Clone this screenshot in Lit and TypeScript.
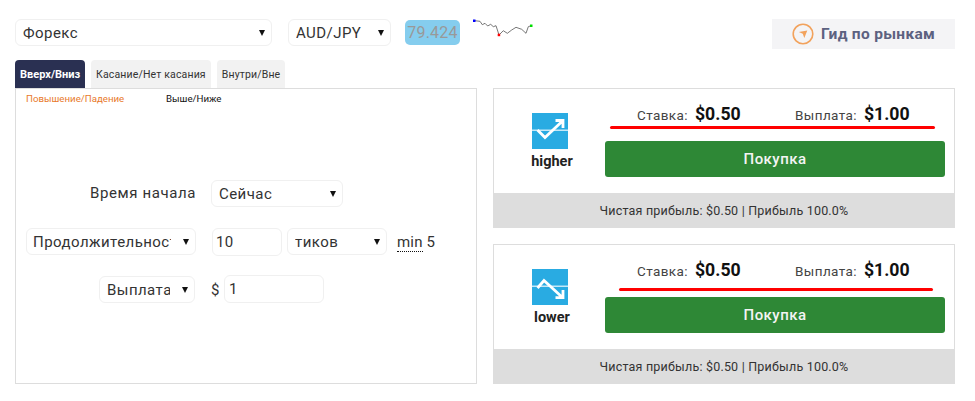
import { LitElement, html, css, svg } from "lit";
import { customElement } from "lit/decorators.js";

const spark = "4.7,5.7 10,6.3 12.3,9.7 15,8.3 17.7,11 20.7,9.3 23.3,11.7 26,10.7 29,20 33.3,15.7 37.3,18.3 41.7,15 46,12.3 51.7,14.3 56,18.3 58.3,11.7 61,10.7";

const higherIcon = svg`<rect width="36" height="36" fill="#29abe2"/><rect y="16.5" width="36" height="1.5" fill="#c4e8f7"/><path d="M5.5 17 13 24.5 30.5 8M23.5 7.5H31V15" fill="none" stroke="#fff" stroke-width="2.8"/>`;
const lowerIcon = svg`<rect width="36" height="36" fill="#29abe2"/><rect y="16.5" width="36" height="1.5" fill="#c4e8f7"/><path d="M5.5 19 12 11.5 30.5 28.5M31 21V28.7H23.5" fill="none" stroke="#fff" stroke-width="2.8"/>`;

@customElement("app-root")
export class AppRoot extends LitElement {
  static styles = css`
    :host {
      display: block;
      width: 975px;
      height: 401px;
      box-sizing: border-box;
      padding: 19px 20px 0 15px;
      background: #fff;
      font-family: Roboto, "Liberation Sans", sans-serif;
      color: #333;
      overflow: hidden;
    }
    * { box-sizing: border-box; }
    .top { display: flex; align-items: flex-start; height: 41px; }
    .sel {
      position: relative;
      display: block;
      height: 27px;
      flex: none;
    }
    .sel select {
      appearance: none;
      width: 100%;
      height: 100%;
      border: 1px solid #f0f0f0;
      border-radius: 6px;
      background: #fff;
      font: 15px Roboto, sans-serif;
      letter-spacing: 0.45px;
      color: #333;
      padding: 0 24px 0 7px;
      outline: none;
    }
    .sel::after {
      content: "";
      position: absolute;
      right: 7px;
      top: 10.5px;
      border-left: 3px solid transparent;
      border-right: 3px solid transparent;
      border-top: 6px solid #111;
      pointer-events: none;
    }
    .market { width: 257px; }
    .pair { width: 103px; margin-left: 16px; }
    .price {
      width: 55px;
      height: 25px;
      margin: 1px 0 0 14px;
      border-radius: 5px;
      background: #85cdee;
      color: #999;
      font-size: 16px;
      letter-spacing: 0.25px;
      line-height: 25px;
      text-align: center;
    }
    .spark { display: block; width: 64px; height: 30px; margin: -4px 0 0 10px; flex: none; }
    .guide {
      margin-left: auto;
      width: 183px;
      height: 30px;
      background: #f4f4f6;
      display: flex;
      align-items: center;
      gap: 7px;
      padding-left: 20px;
      color: #5c6180;
      font-size: 15.5px;
      font-weight: 700;
      letter-spacing: 0.3px;
    }
    .guide svg { width: 22px; height: 22px; flex: none; }
    .tabs { display: flex; gap: 6px; height: 28px; }
    .tab {
      height: 28px;
      padding: 0 5px;
      border-radius: 4px 4px 0 0;
      background: #f2f2f2;
      color: #333;
      font-size: 10.5px;
      line-height: 29px;
      letter-spacing: 0.15px;
    }
    .tab.on { background: #2a3052; color: #fff; font-weight: 700; font-size: 11px; letter-spacing: 0; }
    .main { display: flex; gap: 16px; }
    .panel {
      width: 462px;
      height: 296px;
      border: 1px solid #ddd;
      padding: 3px 10px 0;
    }
    .subs { display: flex; font-size: 9.7px; line-height: 13px; height: 88px; }
    .subs span:first-child { width: 140px; color: #e8792b; }
    .subs span:last-child { color: #111; }
    .form {
      display: grid;
      grid-template-columns: 170px auto;
      justify-content: start;
      column-gap: 16px;
      row-gap: 21px;
    }
    .lab { justify-self: end; font-size: 15px; line-height: 27px; letter-spacing: 0.6px; height: 27px; }
    .ctrl { display: flex; align-items: center; height: 27px; }
    .start { width: 132px; margin-left: -1px; }
    .dur { width: 170px; }
    .form .dur select { padding-left: 6px; }
    .payout { width: 96px; justify-self: end; margin-right: 1px; }
    input {
      height: 28px;
      border: 1px solid #f0f0f0;
      border-radius: 6px;
      font: 15px Roboto, sans-serif;
      letter-spacing: 0.4px;
      color: #333;
      padding: 0 4px;
      outline: none;
      flex: none;
    }
    .n { width: 70px; padding-left: 3px; }
    .units { width: 100px; margin-left: 5px; }
    .min { margin-left: 10px; font-size: 15px; letter-spacing: 0.2px; white-space: nowrap; }
    .min u { text-decoration: none; border-bottom: 1px dotted #111; }
    .dollar { font-size: 15px; width: 13px; margin-left: -1px; }
    .amt { width: 100px; margin-top: -1px; }
    .cards { width: 462px; display: flex; flex-direction: column; gap: 16px; }
    .card {
      height: 140px;
      border: 1px solid #ddd;
      border-bottom: 0;
      display: flex;
      flex-direction: column;
    }
    .body { flex: 1; display: flex; }
    .side { width: 111px; display: flex; flex-direction: column; align-items: center; padding: 24px 0 0 5px; }
    .side svg { width: 36px; height: 36px; display: block; margin-left: -4px; }
    .side b { font-size: 14.5px; font-weight: 700; color: #222; line-height: 17px; margin-top: 4px; }
    .deal { width: 340px; }
    .stats { display: flex; height: 22px; margin-top: 15px; align-items: baseline; font-size: 13.5px; letter-spacing: 0.4px; color: #444; }
    .low .stats { height: 28px; }
    .stats span { white-space: nowrap; }
    .stats b { font-size: 17.7px; font-weight: 700; color: #111; letter-spacing: 0; margin-left: 7px; }
    .s1 { margin-left: 32px; width: 158px; }
    .red { height: 3px; border-radius: 2px; background: #f00; margin: 0 10px 0 5px; }
    .low .red { margin: 0 12px 0 14px; }
    .buy {
      display: block;
      width: 340px;
      height: 36px;
      margin-top: 12px;
      border: 0;
      border-radius: 3px;
      background: #2e8836;
      color: #f4f4f4;
      font: 500 15px Roboto, sans-serif;
      letter-spacing: 0.45px;
    }
    .low .buy { margin-top: 6px; }
    .foot {
      height: 35px;
      margin: 0 -1px;
      background: #ddd;
      text-align: center;
      font-size: 12.5px;
      line-height: 35px;
      letter-spacing: 0.2px;
      color: #333;
    }
  `;

  private sel(cls: string, label: string) {
    return html`<label class="sel ${cls}"><select><option>${label}</option></select></label>`;
  }

  private card(cls: string, name: string, icon: unknown) {
    return html`<div class="card ${cls}">
      <div class="body">
        <div class="side">
          <svg viewBox="0 0 36 36">${icon}</svg>
          <b>${name}</b>
        </div>
        <div class="deal">
          <div class="stats">
            <span class="s1">Ставка:<b>$0.50</b></span>
            <span>Выплата:<b>$1.00</b></span>
          </div>
          <div class="red"></div>
          <button class="buy">Покупка</button>
        </div>
      </div>
      <div class="foot">Чистая прибыль: $0.50 | Прибыль 100.0%</div>
    </div>`;
  }

  render() {
    return html`
      <div class="top">
        ${this.sel("market", "Форекс")}
        ${this.sel("pair", "AUD/JPY")}
        <div class="price">79.424</div>
        <svg class="spark" viewBox="0 0 64 30">
          <polyline points=${spark} fill="none" stroke="#555" stroke-width="0.8"/>
          <rect x="3" y="4.5" width="2.5" height="2.5" fill="#00f"/>
          <rect x="27.7" y="18.7" width="2.5" height="2.5" fill="#f00"/>
          <rect x="60" y="9.5" width="2.5" height="2.5" fill="#0d0"/>
        </svg>
        <div class="guide">
          <svg viewBox="0 0 22 22">
            <circle cx="11" cy="11" r="9.8" fill="none" stroke="#f2a25c" stroke-width="1.6"/>
            <path d="M6.8 9 15.3 7.4 12.3 15 10.8 10.8Z" fill="#f2a25c"/>
          </svg>
          <span>Гид по рынкам</span>
        </div>
      </div>
      <div class="tabs">
        <div class="tab on">Вверх/Вниз</div>
        <div class="tab">Касание/Нет касания</div>
        <div class="tab">Внутри/Вне</div>
      </div>
      <div class="main">
        <div class="panel">
          <div class="subs"><span>Повышение/Падение</span><span>Выше/Ниже</span></div>
          <div class="form">
            <div class="lab">Время начала</div>
            <div class="ctrl">${this.sel("start", "Сейчас")}</div>
            ${this.sel("dur", "Продолжительность")}
            <div class="ctrl">
              <input class="n" value="10" />
              ${this.sel("units", "тиков")}
              <span class="min"><u>min</u> 5</span>
            </div>
            ${this.sel("payout", "Выплата")}
            <div class="ctrl">
              <span class="dollar">$</span>
              <input class="amt" value="1" />
            </div>
          </div>
        </div>
        <div class="cards">
          ${this.card("high", "higher", higherIcon)}
          ${this.card("low", "lower", lowerIcon)}
        </div>
      </div>
    `;
  }
}
